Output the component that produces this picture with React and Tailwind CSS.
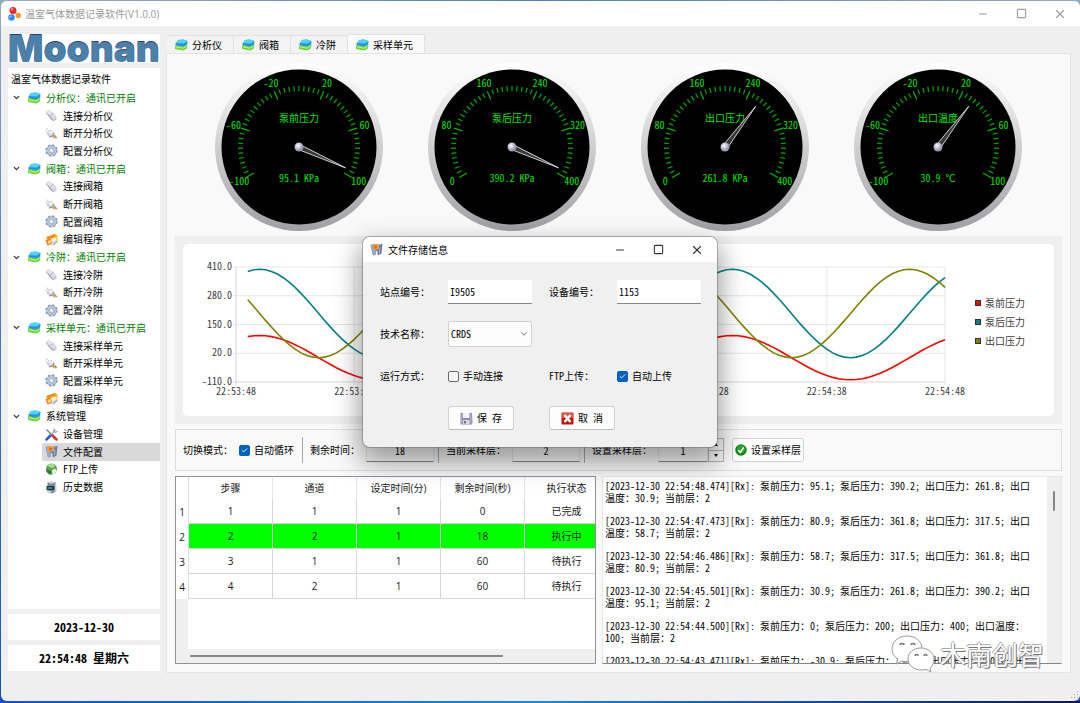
import { useState } from 'react'
import { Check, ChevronDown, Minus, Square, X } from 'lucide-react'

const connectItems = (name, editable) => [
  { icon: PlugIcon, label: `连接${name}` },
  { icon: UnplugIcon, label: `断开${name}` },
  { icon: GearIcon, label: `配置${name}` },
  ...(editable ? [{ icon: EditIcon, label: '编辑程序' }] : []),
]

const TREE = [
  { label: '分析仪：通讯已开启', online: true, items: connectItems('分析仪') },
  { label: '阀箱：通讯已开启', online: true, items: connectItems('阀箱', true) },
  { label: '冷阱：通讯已开启', online: true, items: connectItems('冷阱') },
  { label: '采样单元：通讯已开启', online: true, items: connectItems('采样单元', true) },
  {
    label: '系统管理',
    items: [
      { icon: ToolsIcon, label: '设备管理' },
      { icon: FilesIcon, label: '文件配置' },
      { icon: GlobeIcon, label: 'FTP上传' },
      { icon: HistoryIcon, label: '历史数据' },
    ],
  },
]

const TABS = ['分析仪', '阀箱', '冷阱', '采样单元']

const GAUGES = [
  { title: '泵前压力', value: 95.1, unit: 'KPa', min: -100, max: 100 },
  { title: '泵后压力', value: 390.2, unit: 'KPa', min: 0, max: 400 },
  { title: '出口压力', value: 261.8, unit: 'KPa', min: 0, max: 400 },
  { title: '出口温度', value: 30.9, unit: '℃', min: -100, max: 100 },
]

const wave = (mid, amp, peak) => t => mid + amp * Math.cos((2 * Math.PI * (t - peak)) / 20)

const SERIES = [
  { name: '泵前压力', color: '#ff0000', at: wave(0, 100, 2) },
  { name: '泵后压力', color: '#008080', at: wave(200, 200, 2) },
  { name: '出口压力', color: '#808000', at: wave(200, 200, 17) },
]

const COLUMNS = ['步骤', '通道', '设定时间(分)', '剩余时间(秒)', '执行状态']

const STEPS = [
  [1, 1, 1, 0, '已完成'],
  [2, 2, 1, 18, '执行中'],
  [3, 1, 1, 60, '待执行'],
  [4, 2, 1, 60, '待执行'],
]

const LOGS = [
  ['[2023-12-30 22:54:48.474][Rx]: 泵前压力：95.1; 泵后压力：390.2; 出口压力：261.8; 出口', '温度：30.9; 当前层：2'],
  ['[2023-12-30 22:54:47.473][Rx]: 泵前压力：80.9; 泵后压力：361.8; 出口压力：317.5; 出口', '温度：58.7; 当前层：2'],
  ['[2023-12-30 22:54:46.486][Rx]: 泵前压力：58.7; 泵后压力：317.5; 出口压力：361.8; 出口', '温度：80.9; 当前层：2'],
  ['[2023-12-30 22:54:45.501][Rx]: 泵前压力：30.9; 泵后压力：261.8; 出口压力：390.2; 出口', '温度：95.1; 当前层：2'],
  ['[2023-12-30 22:54:44.500][Rx]: 泵前压力：0; 泵后压力：200; 出口压力：400; 出口温度：', '100; 当前层：2'],
  ['[2023-12-30 22:54:43.471][Rx]: 泵前压力：-30.9; 泵后压力：138.1; 出口压力：390.2; 出口', '温度：95.1; 当前层：2'],
]

/* ---------- icons ---------- */

function AppIcon() {
  return (
    <svg className="w-[13px] h-[14px]" viewBox="0 0 26 28" aria-hidden="true">
      <path d="M11 7l-4 14M10 8l12 9" stroke="#b9c4d6" strokeWidth="3" />
      <circle cx="10" cy="7" r="7" fill="#f0262b" />
      <circle cx="8" cy="4.500" r="2.500" fill="#ff8a8a" />
      <circle cx="20.500" cy="17" r="5.500" fill="#f59b23" />
      <circle cx="7" cy="21" r="6.500" fill="#2c8df2" />
      <circle cx="5" cy="19" r="2" fill="#8cc6ff" />
    </svg>
  )
}

function BoxIcon() {
  return (
    <svg className="w-[13px] h-[12px] shrink-0" viewBox="0 0 26 24" aria-hidden="true">
      <path d="M1 9l5-7 10-1 9 3-1 14-7 4-16-3z" fill="#35a3ea" />
      <path d="M6 2l10-1 9 3-7 5-15-1z" fill="#4fd3f5" />
      <path d="M2 9l15 1 7-5v4l-7 5-15-2z" fill="#2391e2" />
      <path d="M1 13c6-2 10 3 16 2l7-4v7l-7 5-17-3z" fill="#6fd62f" />
      <path d="M2 16c5-1 9 3 15 2l6-4" stroke="#d4f59a" strokeWidth="2" fill="none" />
    </svg>
  )
}

function PlugIcon() {
  return (
    <svg className="w-[13px] h-[13px]" viewBox="0 0 26 26" aria-hidden="true">
      <path d="M2 6l5-4 6 4 5 3 5 7v5l-5 3-7-4-5-7-4-3z" fill="#c9c8d8" />
      <path d="M3 6l4-3 8 6-4 4z" fill="#e9e9f1" />
      <path d="M10 12l6-3 6 7-5 4z" fill="#dddde8" />
      <path d="M6 12l6 8 6 4M15 9l-4 4" stroke="#9695ad" strokeWidth="1.500" fill="none" />
    </svg>
  )
}

function UnplugIcon() {
  return (
    <svg className="w-[13px] h-[13px]" viewBox="0 0 26 26" aria-hidden="true">
      <path d="M2 3l6 5M1 8l5 4" stroke="#c0c0cc" strokeWidth="2" />
      <path d="M4 11l8-6 7 7-2 7-8 1-5-5z" fill="#cfced9" />
      <path d="M6 11l6-4 5 5-6 3z" fill="#efeff4" />
      <path d="M8 20l8-2 2-6" stroke="#86859a" strokeWidth="2" fill="none" />
      <path d="M15 21l5-6 5 7-4 1-2-2-2 2z" fill="#c99a55" />
    </svg>
  )
}

function GearIcon() {
  return (
    <svg className="w-[13px] h-[13px]" viewBox="0 0 26 26" aria-hidden="true">
      <circle cx="13" cy="13" r="10.500" fill="none" stroke="#8a9cb4" strokeWidth="4" strokeDasharray="4.500 3.750" />
      <circle cx="13" cy="13" r="7.500" fill="none" stroke="#8fa3bd" strokeWidth="6" />
      <circle cx="13" cy="13" r="7.500" fill="none" stroke="#c9d6e6" strokeWidth="2.500" />
      <circle cx="13" cy="13" r="4" fill="#fff" stroke="#7f90a8" strokeWidth="1" />
    </svg>
  )
}

function EditIcon() {
  return (
    <svg className="w-[13px] h-[13px]" viewBox="0 0 26 26" aria-hidden="true">
      <path d="M3 8L20 2l5 3v14H8z" fill="#f7b52e" />
      <path d="M3 8l17-6 1 5-17 6z" fill="#f08a1d" />
      <path d="M9 12l14-3v9H9z" fill="#fff3c9" />
      <path d="M1 14l11-3 2 11-9 3z" fill="#ef7d22" />
      <path d="M5 16l6-2 1 6-5 2z" fill="#ffe08a" />
      <path d="M14 24l8-9 3 3-8 7z" fill="#8eb5e6" />
    </svg>
  )
}

function ToolsIcon() {
  return (
    <svg className="w-[13px] h-[13px]" viewBox="0 0 26 26" aria-hidden="true">
      <path d="M3 3l12 12" stroke="#70747c" strokeWidth="2.500" />
      <path d="M14 14l9 9" stroke="#d33123" strokeWidth="5" strokeLinecap="round" />
      <path d="M21 4L11 15" stroke="#a9b0bb" strokeWidth="3" />
      <path d="M19 1l-2 5 3 3 5-2" stroke="#8a919c" strokeWidth="2" fill="none" />
      <path d="M11 15l-8 8" stroke="#2c5fc4" strokeWidth="5" strokeLinecap="round" />
    </svg>
  )
}

function FilesIcon() {
  return (
    <svg className="w-[13px] h-[13px]" viewBox="0 0 26 26" aria-hidden="true">
      <path d="M1 4l7-2 12 1 5-2-2 20-7 4-2-9-3 0 1 7-6 2z" fill="#6f86b8" />
      <path d="M1 4l6-1 5 20-6 2z" fill="#9aa7c4" />
      <path d="M5 3l13-1 1 9-11 4z" fill="#f0a63a" />
      <path d="M8 5l7 1-2 5-4 1z" fill="#e5622a" />
      <path d="M18 8l6-5-2 17-5 3z" fill="#4f74c2" />
      <path d="M19 9l2-1-1 12-2 1z" fill="#e3c66a" />
    </svg>
  )
}

function GlobeIcon() {
  return (
    <svg className="w-[13px] h-[13px]" viewBox="0 0 26 26" aria-hidden="true">
      <circle cx="13" cy="12" r="11" fill="#5aa14a" />
      <path d="M4 6c5-5 13-5 17-1-4 3-3 5-7 5S8 6 4 6z" fill="#a7d989" />
      <path d="M2 13c5-1 6 3 10 2l1 8C7 23 3 19 2 13z" fill="#2f7d32" />
      <path d="M14 14l6-3 4 5-4 4-3 5-3-5z" fill="#e5f3dc" />
    </svg>
  )
}

function HistoryIcon() {
  return (
    <svg className="w-[13px] h-[13px]" viewBox="0 0 26 26" aria-hidden="true">
      <path d="M5 3l8-2 8 2v19l-8 3-8-3z" fill="#7c868f" />
      <path d="M5 3l8-2 8 2-8 3z" fill="#cdd3d8" />
      <path d="M3 10h19v8H3z" fill="#25313b" />
      <path d="M5 12h10v4H5z" fill="#2b8a96" />
      <path d="M19 8l4 1v12l-4 2z" fill="#c9ced3" />
      <path d="M6 19l7 2v3l-7-2z" fill="#d9dde0" />
    </svg>
  )
}

function SaveIcon() {
  return (
    <svg className="w-[13px] h-[13px]" viewBox="0 0 26 26" aria-hidden="true">
      <path d="M1 2h23l1 21-2 2H1z" fill="#8d8ba8" />
      <path d="M6 2h13v10H6z" fill="#f4f4fa" />
      <path d="M2 3h3v20H2zM20 3h3v20h-3z" fill="#aaa8c4" />
      <path d="M6 16h13v8H6z" fill="#d9d9e6" />
      <path d="M8 18h4v5H8z" fill="#716f8c" />
    </svg>
  )
}

function CancelIcon() {
  return (
    <svg className="w-[13px] h-[13px]" viewBox="0 0 26 26" aria-hidden="true">
      <rect x="1" y="1" width="24" height="24" rx="2" fill="#b5180f" />
      <rect x="2" y="2" width="22" height="10" fill="#dd5a4a" />
      <path d="M7 6l12 14M19 6L7 20" stroke="#fff" strokeWidth="5" />
    </svg>
  )
}

function OkIcon() {
  return (
    <svg className="w-[12px] h-[12px]" viewBox="0 0 24 24" aria-hidden="true">
      <circle cx="12" cy="12" r="11.500" fill="#0c8a12" />
      <circle cx="12" cy="10" r="8" fill="#2ba42f" />
      <path d="M6.500 12.500l4 4.500 7-10" stroke="#fff" strokeWidth="3" fill="none" />
    </svg>
  )
}

/* ---------- pieces ---------- */

function WindowButtons({ tone }) {
  return (
    <div className={`ml-auto flex h-full ${tone}`}>
      <button aria-label="最小化" className="w-[38px] flex items-center justify-center"><Minus className="w-3 h-3" strokeWidth={2} /></button>
      <button aria-label="最大化" className="w-[38px] flex items-center justify-center"><Square className="w-[11px] h-[11px]" strokeWidth={2.4} /></button>
      <button aria-label="关闭" className="w-10 flex items-center justify-center"><X className="w-3.5 h-3.5" strokeWidth={1.9} /></button>
    </div>
  )
}

function CheckBox({ label, defaultChecked }) {
  return (
    <label className="flex items-center gap-1 whitespace-nowrap">
      <span className="relative flex">
        <input
          type="checkbox"
          defaultChecked={defaultChecked}
          className="peer appearance-none w-[11px] h-[11px] rounded-[2px] border border-[#6b6b6b] bg-[#f7f7f7] checked:bg-[#0062bd] checked:border-[#0062bd]"
        />
        <Check className="hidden peer-checked:block absolute inset-0 w-[11px] h-[11px] p-0.5 text-white pointer-events-none" strokeWidth={3} />
      </span>
      {label}
    </label>
  )
}

function Sidebar() {
  const [selected, setSelected] = useState('文件配置')
  return (
    <aside className="w-[152px] shrink-0 flex flex-col gap-[5px] pb-0.5">
      <div className="h-[29px] bg-white flex items-center justify-center">
        <span className="font-['Inter',sans-serif] font-black text-[37px] leading-[29px] text-[#4b80aa] [text-shadow:0_-1px_0_#2f3f6e]">Moonan</span>
      </div>
      <nav className="flex-1 bg-white">
        <div className="h-[21px] flex items-center pl-[3px]">温室气体数据记录软件</div>
        <div className="grid auto-rows-fr h-[407px]">
          {TREE.map(group => [
            <div key={group.label} className={`flex items-center pl-1 ${group.online ? 'text-[#008000]' : ''}`}>
              <ChevronDown className="w-[9px] h-[9px] text-[#333]" strokeWidth={3.5} />
              <span className="ml-[7px] mr-[5px]"><BoxIcon /></span>
              {group.label}
            </div>,
            ...group.items.map(({ icon: Icon, label }) => (
              <button
                key={group.label + label}
                onClick={() => setSelected(label)}
                className={`ml-[34px] pl-[3px] flex items-center gap-[5px] text-left rounded-l-[2px] ${selected === label ? 'bg-[#d9d9d9]' : ''}`}
              >
                <Icon />
                {label}
              </button>
            )),
          ])}
        </div>
      </nav>
      <div className="h-[26px] bg-white flex items-center justify-center text-[12px] font-bold [font-feature-settings:'hwid']">2023-12-30</div>
      <div className="h-[26px] bg-white flex items-center justify-center text-[12px] font-bold [font-feature-settings:'hwid']">22:54:48 星期六</div>
    </aside>
  )
}

const polar = (deg, r) => {
  const a = (deg * Math.PI) / 180
  return [84 + r * Math.sin(a), 84 - r * Math.cos(a)]
}

function Gauge({ title, value, unit, min, max, id }) {
  const angle = ((value - min) / (max - min)) * 240 - 120
  return (
    <svg viewBox="0 0 168 168" className="w-[168px] h-[168px]" role="img" aria-label={`${title} ${value} ${unit}`}>
      <defs>
        <linearGradient id={`rim${id}`} x1="0" y1="0" x2="0" y2="1">
          <stop offset="0" stopColor="#ffffff" />
          <stop offset="1" stopColor="#a09fa4" />
        </linearGradient>
        <radialGradient id={`hub${id}`} cx="0.4" cy="0.35">
          <stop offset="0" stopColor="#ffffff" />
          <stop offset="1" stopColor="#9a9ab8" />
        </radialGradient>
      </defs>
      <circle cx="84" cy="84" r="84" fill={`url(#rim${id})`} />
      <circle cx="84" cy="84" r="77.500" fill="#000" />
      {Array.from({ length: 51 }, (_, i) => {
        const major = i % 10 === 0
        const [x1, y1] = polar(i * 4.8 - 120, 61)
        const [x2, y2] = polar(i * 4.8 - 120, major ? 52 : 56)
        return <line key={i} x1={x1} y1={y1} x2={x2} y2={y2} stroke={major ? '#00b800' : '#00a800'} strokeWidth="1.200" />
      })}
      <g fill="#00e400" fontSize="10" textAnchor="middle">
        {Array.from({ length: 6 }, (_, i) => {
          const [x, y] = polar(i * 48 - 120, 69)
          return <text key={i} x={x} y={y + 3.5}>{min + ((max - min) / 5) * i}</text>
        })}
        <text x="84" y="59">{title}</text>
        <text x="84" y="119">{value} {unit}</text>
      </g>
      <g transform={`rotate(${angle} 84 84)`}>
        <path d="M81.500 82L84 33l2.500 49z" fill="#3a3a3a" stroke="#e2e2e2" strokeWidth="0.800" />
      </g>
      <circle cx="84" cy="84" r="4.500" fill={`url(#hub${id})`} />
    </svg>
  )
}

const px = t => 53 + (t / 60) * 709
const py = v => 23 + ((410 - v) / 520) * 115

function TrendChart() {
  return (
    <div className="mt-[5px] bg-[#efefef] p-2">
      <div className="bg-white rounded-[5px] flex items-center">
        <svg viewBox="0 0 778 172" className="flex-1 min-w-0 overflow-visible" role="img" aria-label="压力曲线">
          {[410, 280, 150, 20, -110].map(v => (
            <g key={v}>
              <line x1="50" x2="762" y1={py(v)} y2={py(v)} stroke={v === -110 ? '#d6d6d6' : '#e6e6e6'} />
              <text x="49" y={py(v) + 3} textAnchor="end" fontSize="10" fill="#404040">{v.toFixed(1)}</text>
            </g>
          ))}
          {['22:53:48', '22:53:58', '22:54:08', '22:54:18', '22:54:28', '22:54:38', '22:54:48'].map((label, i) => (
            <g key={label}>
              <line x1={px(i * 10)} x2={px(i * 10)} y1="23" y2="141" stroke={i === 0 ? '#d6d6d6' : '#e6e6e6'} />
              <text x={px(i * 10)} y="151" textAnchor="middle" fontSize="10" fill="#404040">{label}</text>
            </g>
          ))}
          {SERIES.map(s => (
            <polyline
              key={s.name}
              fill="none"
              stroke={s.color}
              strokeWidth="1.600"
              points={Array.from({ length: 119 }, (_, i) => `${px(1 + i / 2).toFixed(1)},${py(s.at(1 + i / 2)).toFixed(1)}`).join(' ')}
            />
          ))}
        </svg>
        <ul className="w-[93px] shrink-0 pl-[14px] pb-4 leading-[19px] text-[#404040] font-['Open_Sans','Noto_Sans_CJK_SC',sans-serif]">
          <li className="flex items-center gap-1"><i className="w-1.5 h-1.5 border border-[#333] bg-[#ff0000]" />泵前压力</li>
          <li className="flex items-center gap-1"><i className="w-1.5 h-1.5 border border-[#333] bg-[#008080]" />泵后压力</li>
          <li className="flex items-center gap-1"><i className="w-1.5 h-1.5 border border-[#333] bg-[#808000]" />出口压力</li>
        </ul>
      </div>
    </div>
  )
}

function Divider() {
  return <div className="w-px h-[26px] ml-1 mr-[7px] bg-[#a8a8a8]" />
}

function ControlBar() {
  const [layer, setLayer] = useState(1)
  const field = 'h-6 text-center bg-[#fbfbfb] border border-[#e8e8e8] border-b-[#868686]'
  return (
    <div className="mt-[5px] h-[42px] pl-[7px] flex items-center border border-[#dedede] whitespace-nowrap">
      <span className="mr-1.5">切换模式：</span>
      <CheckBox label="自动循环" defaultChecked />
      <div className="w-1" />
      <Divider />
      <label htmlFor="remain" className="mr-1.5">剩余时间：</label>
      <input id="remain" readOnly value="18" className={`${field} w-[68px]`} />
      <Divider />
      <label htmlFor="current" className="mr-1.5">当前采样层：</label>
      <input id="current" readOnly value="2" className={`${field} w-[68px]`} />
      <Divider />
      <label htmlFor="target" className="mr-1.5">设置采样层：</label>
      <input id="target" value={layer} onChange={e => setLayer(Number(e.target.value) || 1)} className={`${field} w-[50px]`} />
      <div className="flex flex-col w-4 h-6">
        <button aria-label="增加" onClick={() => setLayer(layer + 1)} className="flex-1 border border-[#b4b4b4] flex items-center justify-center">
          <svg className="w-1 h-[3px]" viewBox="0 0 4 3"><path d="M0 3L2 0l2 3z" /></svg>
        </button>
        <button aria-label="减少" onClick={() => setLayer(Math.max(1, layer - 1))} className="flex-1 border border-t-0 border-[#b4b4b4] flex items-center justify-center">
          <svg className="w-1 h-[3px]" viewBox="0 0 4 3"><path d="M0 0h4L2 3z" /></svg>
        </button>
      </div>
      <button className="ml-2 h-6 w-[72px] flex items-center justify-center gap-1 rounded-[3px] border border-[#d2d2d2] bg-[#fdfdfd]">
        <OkIcon />设置采样层
      </button>
    </div>
  )
}

function StepTable() {
  return (
    <div className="w-[421px] shrink-0 border border-[#8f929b] bg-white overflow-hidden flex flex-col font-['Open_Sans','Noto_Sans_CJK_SC',sans-serif] [font-feature-settings:normal] text-[#1a1a1a]">
      <table className="table-fixed w-[433px] leading-4 border-separate border-spacing-0">
        <thead>
          <tr className="h-[22px]">
            <th className="w-[13px] border-r border-[#dcdcdc]" />
            {COLUMNS.map(c => <th key={c} className="w-[84px] font-normal p-0 border-r border-[#e6e6e6]">{c}</th>)}
          </tr>
        </thead>
        <tbody>
          {STEPS.map(row => (
            <tr key={row[0]} className="h-[25px]">
              <th className="font-normal p-0 border-r border-[#dcdcdc]">{row[0]}</th>
              {row.map((cell, i) => (
                <td key={i} className={`p-0 text-center border-r border-b border-[#d8d8d8] ${row[4] === '执行中' ? 'bg-[#00ff00]' : ''}`}>{cell}</td>
              ))}
            </tr>
          ))}
        </tbody>
      </table>
      <div className="flex-1 w-3 bg-[#efefef]" />
      <div className="h-3.5 bg-[#efefef] flex items-center pl-3.5">
        <div className="w-[313px] h-0.5 rounded-full bg-[#868686]" />
      </div>
    </div>
  )
}

function LogPanel() {
  return (
    <div className="flex-1 min-w-0 h-[188px] flex border border-[#e8e8e8] border-b-[#868686] bg-white overflow-hidden">
      <div role="log" className="flex-1 min-w-0 pl-0.5 pt-[3px] leading-3 whitespace-nowrap overflow-hidden">
        {LOGS.map(lines => (
          <div key={lines[0]} className="mb-[11px]">
            {lines.map(line => <p key={line}>{line}</p>)}
          </div>
        ))}
      </div>
      <div className="w-3.5 bg-[#efefef] flex justify-center pt-3.5">
        <div className="w-0.5 h-5 rounded-full bg-[#868686]" />
      </div>
    </div>
  )
}

function FileDialog() {
  const input = 'h-6 w-[84px] px-0.5 bg-white border-b border-[#868686]'
  const button = 'h-6 w-[66px] flex items-center justify-center gap-1 rounded-[3px] bg-[#fdfdfd] border border-[#d2d2d2] border-b-[#bcbcbc] whitespace-pre'
  return (
    <section
      role="dialog"
      aria-label="文件存储信息"
      className="absolute left-[363px] top-[237px] w-[354px] rounded-[7px] overflow-hidden bg-[#f0f0f0] shadow-[0_0_0_1px_rgba(110,110,110,0.5),0_12px_26px_4px_rgba(0,0,0,0.38)]"
    >
      <header className="h-[25px] pl-[7px] flex items-center gap-[5px] bg-white font-['Open_Sans','Noto_Sans_CJK_SC',sans-serif]">
        <FilesIcon />
        文件存储信息
        <WindowButtons tone="text-[#333]" />
      </header>
      <form onSubmit={e => e.preventDefault()} className="grid grid-cols-[68px_101px_68px_1fr] auto-rows-[42px] items-center pl-[17px] pt-[9px] pb-2">
        <label htmlFor="site">站点编号：</label>
        <input id="site" defaultValue="I9505" className={input} />
        <label htmlFor="device">设备编号：</label>
        <input id="device" defaultValue="1153" className={input} />

        <label htmlFor="tech">技术名称：</label>
        <div className="relative w-[84px] col-span-3">
          <select id="tech" className="appearance-none w-full h-[26px] px-0.5 bg-[#fdfdfd] border border-[#d0d0d0] rounded-[2px]">
            <option>CRDS</option>
          </select>
          <ChevronDown className="absolute right-[3px] top-2 w-2.5 h-2.5 text-[#555] pointer-events-none" />
        </div>

        <span>运行方式：</span>
        <CheckBox label="手动连接" />
        <span>FTP上传：</span>
        <CheckBox label="自动上传" defaultChecked />

        <button className={`${button} col-start-2`}><SaveIcon />保 存</button>
        <button type="button" className={button}><CancelIcon />取 消</button>
      </form>
    </section>
  )
}

function Watermark() {
  return (
    <div className="absolute right-9 bottom-[30px] flex items-center gap-1.5 pointer-events-none">
      <svg className="w-[43px] h-[38px]" viewBox="0 0 43 38" fill="#fff" stroke="#9a9a9a" aria-hidden="true">
        <path d="M16 1C7 1 1 7 1 14c0 4 2 8 6 10l-2 5 6-3c2 .6 4 .8 6 .8 8 0 14-6 14-13S25 1 16 1z" />
        <path d="M30 13c-8 0-13 5-13 11s6 11 13 11c2 0 3-.2 5-.7l5 2.700-1-4c3-2 4-5 4-9 0-6-6-11-13-11z" />
        <path d="M9 10c0-2 4-2 4 0M20 10c0-2 4-2 4 0M24 21c0-2 3-2 3 0M33 21c0-2 3-2 3 0" fill="none" strokeWidth="1.500" stroke="#777" />
      </svg>
      <span className="text-[26px] leading-8 text-white [text-shadow:1px_1px_0_#777,-1px_0_0_#aaa,0_-1px_0_#aaa]">木南创智</span>
    </div>
  )
}

export default function App() {
  const [tab, setTab] = useState('采样单元')
  return (
    <div className="relative min-h-screen flex flex-col pl-px bg-linear-to-b from-[#93a9be] via-[#3f78bd] to-[#1450c0] text-[10px] leading-4 text-black font-['Noto_Sans_CJK_SC',sans-serif] [font-feature-settings:'hwid']">
      <div className="h-px bg-linear-to-r from-[#9fadb9] via-[#4f80c6] to-[#94a9bd]" />
      <div className="flex-1 flex flex-col rounded-[6px] overflow-hidden bg-[#efefef]">
        <header className="h-[25px] shrink-0 pl-[7px] flex items-center gap-1 bg-white text-[#9b9b9b] font-['Open_Sans','Noto_Sans_CJK_SC',sans-serif]">
          <AppIcon />
          温室气体数据记录软件(V1.0.0)
          <WindowButtons tone="text-[#9b9b9b]" />
        </header>

        <div className="flex-1 flex gap-1.5 pt-2 pl-[7px] pr-[9px]">
          <Sidebar />
          <main className="flex-1 min-w-0 flex flex-col">
            <div role="tablist" className="flex items-end h-[19px] pl-px">
              {TABS.map(name => (
                <button
                  key={name}
                  role="tab"
                  aria-selected={tab === name}
                  onClick={() => setTab(name)}
                  className={`flex items-center gap-1 pl-2 pr-[11px] border-t border-r ${tab === name ? 'h-5 -mb-px bg-[#f9f9f9] border-[#e2e2e2]' : 'h-[18px] bg-[#f3f3f3] border-[#e2e2e2]'}`}
                >
                  <BoxIcon />
                  {name}
                </button>
              ))}
            </div>
            <div className="flex-1 px-2 pt-[9px] pb-2 border border-[#e4e4e4] bg-[#f9f9f9]">
              <div className="grid grid-cols-4 justify-items-center px-[17px]">
                {GAUGES.map((g, i) => <Gauge key={g.title} id={i} {...g} />)}
              </div>
              <TrendChart />
              <ControlBar />
              <div className="mt-[5px] flex gap-1.5">
                <StepTable />
                <LogPanel />
              </div>
            </div>
          </main>
        </div>

        <footer className="h-7 flex items-end justify-end">
          <svg className="w-2 h-2 mb-0.5 mr-px" viewBox="0 0 8 8" fill="#aaa" aria-hidden="true">
            <path d="M6 0h1v1H6zM3 3h1v1H3zM6 3h1v1H6zM0 6h1v1H0zM3 6h1v1H3zM6 6h1v1H6z" />
          </svg>
        </footer>
      </div>
      <div className="h-0.5 bg-linear-to-r from-[#1450d0] via-[#1c86e6] to-[#0a1a52]" />
      <Watermark />
      <FileDialog />
    </div>
  )
}
